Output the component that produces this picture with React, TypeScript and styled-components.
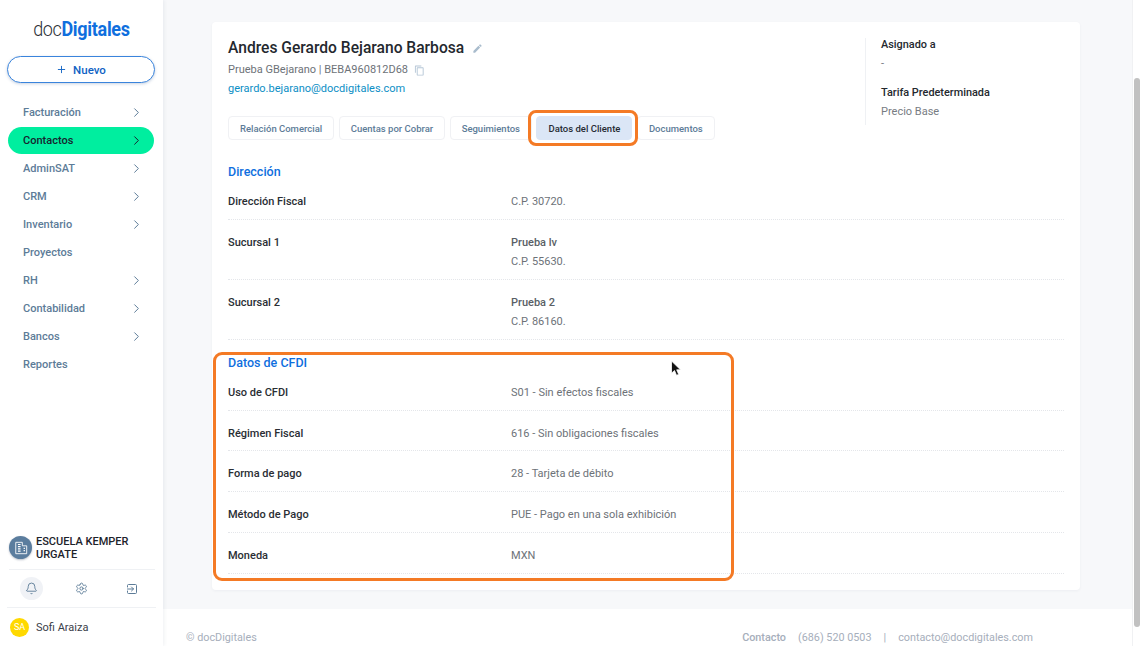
import React from 'react';
import styled, { createGlobalStyle } from 'styled-components';
import { Bell, ChevronRight, Plus, Settings } from 'lucide-react';
import { MdEdit, MdOutlineContentCopy } from 'react-icons/md';

const NAV_ITEMS = [
  { label: 'Facturación', arrow: true },
  { label: 'Contactos', arrow: true, active: true },
  { label: 'AdminSAT', arrow: true },
  { label: 'CRM', arrow: true },
  { label: 'Inventario', arrow: true },
  { label: 'Proyectos', arrow: false },
  { label: 'RH', arrow: true },
  { label: 'Contabilidad', arrow: true },
  { label: 'Bancos', arrow: true },
  { label: 'Reportes', arrow: false },
];

const TABS = ['Relación Comercial', 'Cuentas por Cobrar', 'Seguimientos', 'Datos del Cliente', 'Documentos'];

const CFDI_ROWS = [
  ['Uso de CFDI', 'S01 - Sin efectos fiscales'],
  ['Régimen Fiscal', '616 - Sin obligaciones fiscales'],
  ['Forma de pago', '28 - Tarjeta de débito'],
  ['Método de Pago', 'PUE - Pago en una sola exhibición'],
  ['Moneda', 'MXN'],
];

const App: React.FC = () => (
  <Page>
    <GlobalStyle />
    <Sidebar>
      <Logo>
        <LogoLight>doc</LogoLight>
        <LogoBold>Digitales</LogoBold>
      </Logo>
      <NewButton>
        <Plus size={11} strokeWidth={2} />
        Nuevo
      </NewButton>
      <Nav>
        {NAV_ITEMS.map((item) => (
          <NavItem key={item.label} $active={item.active}>
            {item.label}
            {item.arrow && <ChevronRight size={15} strokeWidth={1.6} />}
          </NavItem>
        ))}
      </Nav>
      <Company>
        <CompanyBadge>
          <svg width="14" height="14" viewBox="0 0 16 16" fill="none" stroke="currentColor" strokeWidth="1">
            <path d="M2 14.5V1.5h7.5v4h5v9z" />
            <path d="M4.5 4h3M4.5 6.5h3M4.5 9h3M4.5 11.5h3M11 8.5h1.5M11 11h1.5" strokeWidth="1.3" />
          </svg>
        </CompanyBadge>
        <CompanyName>ESCUELA KEMPER URGATE</CompanyName>
      </Company>
      <IconRow>
        <BellButton>
          <Bell size={13} strokeWidth={1.7} />
        </BellButton>
        <Settings size={13} strokeWidth={1.7} />
        <svg width="12" height="12" viewBox="0 0 24 24" fill="none" stroke="currentColor" strokeWidth="2" strokeLinecap="round" strokeLinejoin="round">
          <path d="M3 8V5a2 2 0 0 1 2-2h14a2 2 0 0 1 2 2v14a2 2 0 0 1-2 2H5a2 2 0 0 1-2-2v-3" />
          <path d="M3 12h12M11 8l4 4-4 4" />
        </svg>
      </IconRow>
      <UserRow>
        <UserBadge>SA</UserBadge>
        Sofi Araiza
      </UserRow>
    </Sidebar>

    <Main>
      <Content>
        <Card>
          <Header>
            <HeaderInfo>
              <Name>
                Andres Gerardo Bejarano Barbosa
                <EditIcon>
                  <MdEdit size={11} />
                </EditIcon>
              </Name>
              <SubLine>
                Prueba GBejarano | BEBA960812D68
                <CopyIcon>
                  <MdOutlineContentCopy size={11} />
                </CopyIcon>
              </SubLine>
              <Email>gerardo.bejarano@docdigitales.com</Email>
              <Tabs>
                {TABS.map((tab) => (
                  <Tab key={tab} $active={tab === 'Datos del Cliente'}>
                    {tab}
                  </Tab>
                ))}
              </Tabs>
            </HeaderInfo>
            <Aside>
              <AsideLabel>Asignado a</AsideLabel>
              <AsideValue>-</AsideValue>
              <AsideLabel $spaced>Tarifa Predeterminada</AsideLabel>
              <AsideValue>Precio Base</AsideValue>
            </Aside>
          </Header>

          <SectionTitle>Dirección</SectionTitle>
          <Row>
            <RowLabel>Dirección Fiscal</RowLabel>
            <RowValue>C.P. 30720.</RowValue>
          </Row>
          <Row>
            <RowLabel>Sucursal 1</RowLabel>
            <RowValue>
              <Branch>Prueba lv</Branch>
              C.P. 55630.
            </RowValue>
          </Row>
          <Row>
            <RowLabel>Sucursal 2</RowLabel>
            <RowValue>
              <Branch>Prueba 2</Branch>
              C.P. 86160.
            </RowValue>
          </Row>

          <SectionTitle $second>Datos de CFDI</SectionTitle>
          {CFDI_ROWS.map(([label, value]) => (
            <Row key={label}>
              <RowLabel>{label}</RowLabel>
              <RowValue>{value}</RowValue>
            </Row>
          ))}
        </Card>
      </Content>
      <Footer>
        <span>© docDigitales</span>
        <FooterContact>
          <strong>Contacto</strong>
          <span>(686) 520 0503</span>
          <span>|</span>
          <span>contacto@docdigitales.com</span>
        </FooterContact>
      </Footer>
    </Main>

    <ScrollTrack>
      <ScrollThumb />
    </ScrollTrack>

    <TabHighlight />
    <CfdiHighlight />
    <Cursor width="12" height="17" viewBox="0 0 12 17">
      <path d="M1.5 1v12.2l3-2.7 2 4.8 2.2-.9-2-4.6H10.5z" fill="#111" stroke="#fff" strokeWidth="0.8" />
    </Cursor>
  </Page>
);

export default App;

const GlobalStyle = createGlobalStyle`
  html, body {
    margin: 0;
    padding: 0;
    height: 100%;
    overflow: hidden;
  }
  body {
    font-family: Roboto, "Liberation Sans", sans-serif;
    background: #f7f8fa;
  }
  * {
    box-sizing: border-box;
  }
`;

const Page = styled.div`
  position: relative;
  display: flex;
  width: 1142px;
  height: 646px;
  overflow: hidden;
  background: #f7f8fa;
`;

const Sidebar = styled.aside`
  flex: 0 0 163px;
  display: flex;
  flex-direction: column;
  min-width: 0;
  height: 646px;
  padding: 0 8px;
  background: #fff;
  box-shadow: 1px 0 4px rgba(40, 60, 90, 0.08);
  z-index: 1;
`;

const Logo = styled.div`
  display: flex;
  justify-content: center;
  align-items: baseline;
  height: 28px;
  margin-top: 16px;
  font-size: 18px;
  line-height: 28px;
  transform: scaleY(1.08);
`;

const LogoLight = styled.span`
  font-weight: 300;
  color: #2b2f36;
  letter-spacing: -0.4px;
`;

const LogoBold = styled.span`
  font-weight: 700;
  color: #0f6fde;
  letter-spacing: -0.3px;
`;

const NewButton = styled.button`
  display: flex;
  align-items: center;
  justify-content: center;
  gap: 6px;
  width: 148px;
  height: 27px;
  margin: 12px 0 0 -1px;
  padding: 0;
  border: 1px solid #3a84dc;
  border-radius: 14px;
  background: #fff;
  box-shadow: 0 1px 3px rgba(40, 80, 140, 0.25);
  color: #0f62c4;
  font-family: inherit;
  font-size: 11.5px;
  font-weight: 500;
`;

const Nav = styled.nav`
  flex: 1;
  display: flex;
  flex-direction: column;
  gap: 1px;
  margin: 16px 1px 0 0;
`;

const NavItem = styled.div<{ $active?: boolean }>`
  display: flex;
  align-items: center;
  justify-content: space-between;
  flex: 0 0 27px;
  padding: 0 10px 0 15px;
  border-radius: 14px;
  background: ${(p) => (p.$active ? '#00ee9f' : 'transparent')};
  color: ${(p) => (p.$active ? '#17242e' : '#5d7c98')};
  font-size: 11px;
  font-weight: 500;
`;

const Company = styled.div`
  display: flex;
  align-items: center;
  gap: 4px;
  height: 37px;
  margin: 0 0 0 1px;
  padding-bottom: 7px;
  border-bottom: 1px solid #eff1f4;
`;

const CompanyBadge = styled.div`
  flex: 0 0 23px;
  display: flex;
  align-items: center;
  justify-content: center;
  height: 23px;
  border-radius: 50%;
  background: #5b7d9e;
  box-shadow: 0 1px 2px rgba(30, 50, 80, 0.3);
  color: #fff;
`;

const CompanyName = styled.div`
  font-size: 11px;
  font-weight: 500;
  line-height: 13px;
  color: #1d232b;
`;

const IconRow = styled.div`
  display: grid;
  grid-template-columns: repeat(3, 50px);
  justify-content: center;
  justify-items: center;
  align-items: center;
  height: 38px;
  margin: 0 -1px;
  border-bottom: 1px solid #eff1f4;
  color: #5d7c98;
`;

const BellButton = styled.div`
  display: flex;
  align-items: center;
  justify-content: center;
  width: 23px;
  height: 23px;
  border-radius: 50%;
  background: #f0f2f6;
`;

const UserRow = styled.div`
  display: flex;
  align-items: center;
  gap: 7px;
  height: 38px;
  padding-left: 2px;
  font-size: 11px;
  color: #3a4048;
`;

const UserBadge = styled.div`
  display: flex;
  align-items: center;
  justify-content: center;
  width: 19px;
  height: 19px;
  border-radius: 50%;
  background: #ffd900;
  color: #fff;
  font-size: 9px;
`;

const Main = styled.main`
  flex: 1;
  display: flex;
  flex-direction: column;
  min-width: 0;
`;

const Content = styled.div`
  flex: 1;
  padding: 22px 52px 0 49px;
`;

const Card = styled.section`
  height: 568px;
  padding: 16px 16px 0;
  border-radius: 4px;
  background: #fff;
  box-shadow: 0 1px 3px rgba(40, 60, 90, 0.05);
`;

const Header = styled.header`
  display: flex;
  justify-content: space-between;
  height: 103px;
`;

const HeaderInfo = styled.div`
  display: flex;
  flex-direction: column;
`;

const Name = styled.h1`
  display: flex;
  align-items: center;
  gap: 8px;
  margin: 1px 0 0;
  height: 19px;
  font-size: 15.6px;
  line-height: 19px;
  font-weight: 500;
  color: #24282e;
`;

const EditIcon = styled.span`
  display: flex;
  color: #a9bccd;
`;

const SubLine = styled.div`
  display: flex;
  align-items: center;
  gap: 6px;
  margin-top: 4px;
  font-size: 11px;
  line-height: 16px;
  color: #6d7278;
`;

const CopyIcon = styled.span`
  display: flex;
  color: #b5c6d6;
`;

const Email = styled.div`
  margin-top: 3px;
  font-size: 11px;
  line-height: 16px;
  color: #0b8ec5;
`;

const Tabs = styled.div`
  display: flex;
  gap: 4.5px;
  margin-top: 19px;
`;

const Tab = styled.div<{ $active?: boolean }>`
  display: flex;
  align-items: center;
  height: 24px;
  padding: 0 11px;
  border-radius: 4px;
  border: 1px solid ${(p) => (p.$active ? '#dbe6f6' : '#f0f1f4')};
  background: ${(p) => (p.$active ? '#dbe6f6' : '#fff')};
  color: ${(p) => (p.$active ? '#262b33' : '#5d7c98')};
  font-size: 9.5px;
  font-weight: 500;
  white-space: nowrap;
`;

const Aside = styled.div`
  width: 199px;
  height: 87px;
  padding-left: 15px;
  border-left: 1px solid #eff1f4;
`;

const AsideLabel = styled.div<{ $spaced?: boolean }>`
  margin-top: ${(p) => (p.$spaced ? '15px' : '0')};
  font-size: 10.9px;
  font-weight: 500;
  line-height: 14px;
  color: #24282e;
`;

const AsideValue = styled.div`
  margin-top: 5px;
  font-size: 11px;
  line-height: 14px;
  color: #777c82;
`;

const SectionTitle = styled.h2<{ $second?: boolean }>`
  margin: ${(p) => (p.$second ? '15px' : '23px')} 0 0;
  height: 16px;
  font-size: 12.5px;
  line-height: 16px;
  font-weight: 500;
  color: #0f6fde;
`;

const Row = styled.div`
  display: grid;
  grid-template-columns: 283px 1fr;
  padding: 13px 0 7.75px;
  border-bottom: 1px dotted #e4e6ea;
  font-size: 11px;
  line-height: 19px;

  ${SectionTitle} + & {
    padding: 12px 0 8px;
  }
`;

const RowLabel = styled.div`
  font-weight: 500;
  color: #2a2e34;
`;

const RowValue = styled.div`
  color: #6d7278;
`;

const Branch = styled.div`
  font-weight: 500;
  color: #5a5f66;
`;

const Footer = styled.footer`
  display: flex;
  justify-content: space-between;
  align-items: center;
  flex: 0 0 37px;
  padding: 19px 99px 0 23px;
  background: #fff;
  color: #a6aebb;
  font-size: 10.8px;
`;

const FooterContact = styled.div`
  display: flex;
  gap: 12px;

  strong {
    font-weight: 500;
  }
`;

const ScrollTrack = styled.div`
  flex: 0 0 10px;
  padding: 78px 2px 19px 1px;
  background: #fff;
  border-left: 1px solid #f0f1f3;
`;

const ScrollThumb = styled.div`
  height: 100%;
  border-radius: 4px;
  background: #c1c1c1;
`;

const TabHighlight = styled.div`
  position: absolute;
  left: 528px;
  top: 110px;
  width: 110px;
  height: 36px;
  border: 3px solid #f47a25;
  border-radius: 8px;
  z-index: 2;
`;

const CfdiHighlight = styled.div`
  position: absolute;
  left: 213px;
  top: 352px;
  width: 521px;
  height: 229px;
  border: 3px solid #f47a25;
  border-radius: 9px;
  z-index: 2;
`;

const Cursor = styled.svg`
  position: absolute;
  left: 670px;
  top: 360px;
  z-index: 3;
`;
